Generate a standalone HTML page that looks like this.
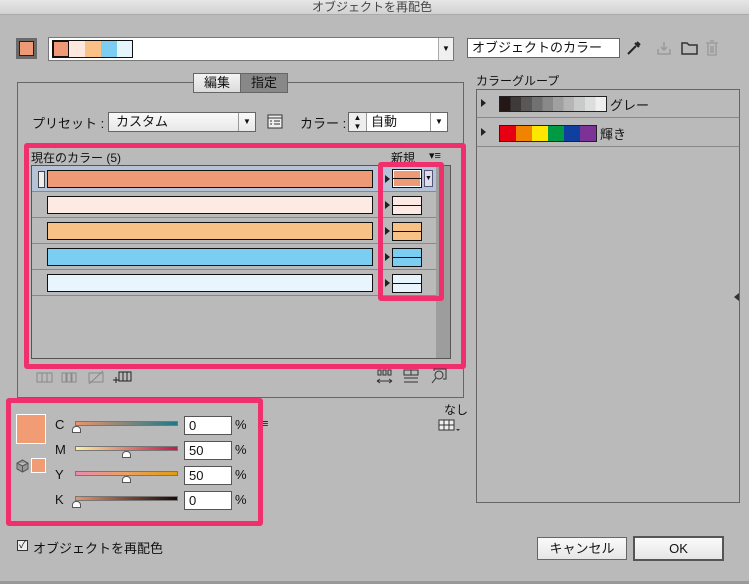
<!DOCTYPE html>
<html><head><meta charset="utf-8"><style>
*{box-sizing:border-box;margin:0;padding:0}
body{width:749px;height:584px;background:#bababa;font-family:"Liberation Sans","Noto Sans CJK JP",sans-serif;font-size:12px;color:#111;position:relative;overflow:hidden}
.a{position:absolute}
.box{position:absolute;background:#fff;border:1px solid #666}
.pink{position:absolute;border:5px solid #f0306c;border-radius:3px}
.bar{position:absolute;left:47px;width:326px;height:18px;border:1px solid #111}
.ns{position:absolute;left:392px;width:30px;height:19px;border:1px solid #111}
.ns:after{content:"";position:absolute;left:0;right:0;top:8px;border-top:1px solid #111}
.tri{position:absolute;width:0;height:0;border-left:5px solid #222;border-top:4px solid transparent;border-bottom:4px solid transparent}
.sl{position:absolute;left:75px;width:103px;height:5px;border:1px solid #777}
.th{position:absolute;width:9px;height:7px;background:#fff;border:1px solid #555;border-radius:4px 4px 0 0}
.in{position:absolute;left:184px;width:48px;height:19px;background:#fff;border:1px solid #555;font-size:13px;padding-left:4px;line-height:17px}
.btn{position:absolute;background:linear-gradient(#fafafa,#e6e6e6);border:1px solid #666;text-align:center;font-size:13px;line-height:21px}
</style></head><body>
<div class="a" style="left:0;top:0;width:749px;height:15px;background:linear-gradient(#e6e6e6,#d2d2d2);border-bottom:1px solid #aaa"></div>
<div class="a" style="left:312px;top:0;font-size:12px;color:#444;line-height:14px">オブジェクトを再配色</div>

<div class="a" style="left:16px;top:38px;width:21px;height:21px;background:#6a6a6a;padding:3px"><div style="width:15px;height:15px;background:#ef9a76;border:1px solid #222"></div></div>
<div class="box" style="left:48px;top:37px;width:406px;height:24px;border-color:#777"></div>
<div class="a" style="left:52px;top:40px;width:81px;height:18px;border:1px solid #111;display:flex">
<div style="width:16px;background:#ef9a76;border:1px solid #111"></div><div style="width:16px;background:#fde8df"></div><div style="width:16px;background:#f9c185"></div><div style="width:16px;background:#7dccf2"></div><div style="flex:1;background:#e6f4fc"></div></div>
<div class="a" style="left:438px;top:38px;width:15px;height:22px;border-left:1px solid #aaa;background:#f0f0f0;font-size:8px;text-align:center;line-height:22px">▼</div>

<div class="box" style="left:467px;top:38px;width:153px;height:20px;font-size:13px;line-height:18px;padding-left:4px">オブジェクトのカラー</div>
<svg class="a" style="left:626px;top:40px" width="16" height="16"><path d="M2 14 L10 6 M9 3 L13 7 M11 2 L14 5" stroke="#222" stroke-width="2" fill="none"/></svg>
<svg class="a" style="left:656px;top:40px" width="16" height="16"><path d="M2 9 V14 H14 V9 M8 2 V10 M5 7 L8 10 L11 7" stroke="#999" stroke-width="1.5" fill="none"/></svg>
<svg class="a" style="left:681px;top:40px" width="17" height="15"><path d="M1 3 H6 L8 5 H16 V14 H1 Z" stroke="#333" stroke-width="1.5" fill="none"/></svg>
<svg class="a" style="left:705px;top:40px" width="14" height="16"><path d="M1 3 H13 M5 1 H9 M3 3 V15 H11 V3 M6 6 V13 M8 6 V13" stroke="#999" stroke-width="1.3" fill="none"/></svg>

<!-- main panel -->
<div class="a" style="left:17px;top:82px;width:447px;height:316px;border:1px solid #666"></div>
<div class="a" style="left:193px;top:73px;width:95px;height:20px;background:#bababa;border:1px solid #666;display:flex;font-size:13px;line-height:18px">
<div style="width:47px;text-align:center;background:linear-gradient(#f3f3f3,#dcdcdc);border-right:1px solid #666">編集</div><div style="flex:1;text-align:center;background:#888">指定</div></div>

<div class="a" style="left:32px;top:113px;font-size:13px">プリセット :</div>
<div class="box" style="left:108px;top:112px;width:148px;height:20px;background:linear-gradient(#fafafa,#e8e8e8);font-size:13px;line-height:18px;padding-left:7px">カスタム<span style="position:absolute;right:0;top:0;width:17px;border-left:1px solid #999;text-align:center;font-size:8px">▼</span></div>
<svg class="a" style="left:267px;top:114px" width="16" height="15"><rect x="1" y="1" width="14" height="13" fill="#eee" stroke="#333"/><path d="M1 4 H15 M3 7 H5 M7 7 H13 M3 10 H5 M7 10 H13" stroke="#333"/></svg>
<div class="a" style="left:300px;top:113px;font-size:13px">カラー :</div>
<div class="box" style="left:348px;top:112px;width:100px;height:20px;font-size:13px;line-height:18px;padding-left:22px">自動<span style="position:absolute;left:0;top:0;width:18px;height:18px;border-right:1px solid #999;background:#eee;font-size:8px;text-align:center;line-height:9px">▲<br>▼</span><span style="position:absolute;right:0;top:0;width:17px;border-left:1px solid #999;text-align:center;font-size:8px">▼</span></div>

<div class="a" style="left:31px;top:149px;font-size:12px">現在のカラー (5)</div>
<div class="a" style="left:391px;top:149px;font-size:12px">新規</div>
<div class="a" style="left:429px;top:149px;font-size:11px">▾≡</div>
<div class="a" style="left:31px;top:165px;width:420px;height:194px;border:1px solid #555;background:#bababa"></div>
<div class="a" style="left:32px;top:166px;width:404px;height:26px;background:#b6c2d6;border-bottom:1px solid #888"></div>
<div class="a" style="left:32px;top:192px;width:404px;height:26px;border-bottom:1px solid #888"></div>
<div class="a" style="left:32px;top:218px;width:404px;height:26px;border-bottom:1px solid #888"></div>
<div class="a" style="left:32px;top:244px;width:404px;height:26px;border-bottom:1px solid #888"></div>
<div class="a" style="left:32px;top:270px;width:404px;height:26px;border-bottom:1px solid #888"></div>
<div class="a" style="left:436px;top:166px;width:14px;height:192px;background:#9d9d9d"></div>
<div class="a" style="left:38px;top:171px;width:7px;height:17px;border:1px solid #444;background:#eee"></div>
<div class="bar" style="top:170px;background:#ef9a76"></div>
<div class="bar" style="top:196px;background:#fdebe3"></div>
<div class="bar" style="top:222px;background:#f8c286"></div>
<div class="bar" style="top:248px;background:#7ccdf2"></div>
<div class="bar" style="top:274px;background:#e8f5fd"></div>
<div class="tri" style="left:385px;top:175px"></div><div class="tri" style="left:385px;top:201px"></div><div class="tri" style="left:385px;top:227px"></div><div class="tri" style="left:385px;top:253px"></div><div class="tri" style="left:385px;top:279px"></div>
<div class="ns" style="top:169px;background:#ef9a76;outline:1px solid #fff;outline-offset:-2px"></div>
<div class="a" style="left:424px;top:170px;width:9px;height:17px;background:#dde;border:1px solid #557;font-size:7px;text-align:center;line-height:15px">▼</div>
<div class="ns" style="top:196px;background:#fdebe3"></div>
<div class="ns" style="top:222px;background:#f8c286"></div>
<div class="ns" style="top:248px;background:#7ccdf2"></div>
<div class="ns" style="top:274px;background:#e8f5fd"></div>
<div class="pink" style="left:24px;top:143px;width:442px;height:226px"></div>
<div class="pink" style="left:378px;top:162px;width:66px;height:139px"></div>

<svg class="a" style="left:35px;top:370px" width="100" height="16"><g stroke="#888" fill="none"><rect x="2" y="3" width="15" height="9"/><path d="M7 3 V12 M12 3 V12"/><rect x="27" y="3" width="4" height="9"/><rect x="32" y="3" width="4" height="9"/><rect x="37" y="3" width="4" height="9"/><rect x="54" y="3" width="14" height="9"/><path d="M54 14 L68 1"/></g><g stroke="#222" fill="none"><rect x="84" y="2" width="12" height="9"/><path d="M88 2 V11 M92 2 V11 M78 10 H84 M81 7 V13"/></g></svg>
<svg class="a" style="left:376px;top:368px" width="72" height="18"><g stroke="#333" fill="none"><rect x="2" y="2" width="3" height="5"/><rect x="7" y="2" width="3" height="5"/><rect x="12" y="2" width="3" height="5"/><path d="M1 13 H16 M1 13 l3 -2 M1 13 l3 2 M16 13 l-3 -2 M16 13 l-3 2"/><rect x="28" y="2" width="14" height="5"/><path d="M28 10 H42 M28 14 H42 M35 2 V7"/><circle cx="63" cy="7" r="4"/><path d="M60 10 L56 15 M58 3 V1 H70 V11 H67"/></g></svg>

<!-- sliders -->
<div class="a" style="left:16px;top:414px;width:30px;height:30px;background:#f19c75;border:1px solid #fff"></div>
<svg class="a" style="left:16px;top:459px" width="13" height="14"><path d="M6.5 1 L12 4 V10 L6.5 13 L1 10 V4 Z M1 4 L6.5 7 L12 4 M6.5 7 V13" stroke="#555" fill="#999"/></svg>
<div class="a" style="left:31px;top:458px;width:15px;height:15px;background:#f19c75;border:1px solid #fff"></div>
<div class="a" style="left:55px;top:417px;font-size:13px">C</div>
<div class="a" style="left:55px;top:442px;font-size:13px">M</div>
<div class="a" style="left:55px;top:467px;font-size:13px">Y</div>
<div class="a" style="left:55px;top:492px;font-size:13px">K</div>
<div class="sl" style="top:421px;background:linear-gradient(90deg,#e9946f,#1b7a87)"></div>
<div class="sl" style="top:446px;background:linear-gradient(90deg,#fbf2a0,#e08070,#c8174a)"></div>
<div class="sl" style="top:471px;background:linear-gradient(90deg,#ea8cb0,#eba060,#e29b10)"></div>
<div class="sl" style="top:496px;background:linear-gradient(90deg,#ea9470,#804a38,#150c08)"></div>
<div class="th" style="left:72px;top:426px"></div>
<div class="th" style="left:122px;top:451px"></div>
<div class="th" style="left:122px;top:476px"></div>
<div class="th" style="left:72px;top:501px"></div>
<div class="in" style="top:416px">0</div><div class="in" style="top:441px">50</div><div class="in" style="top:466px">50</div><div class="in" style="top:491px">0</div>
<div class="a" style="left:235px;top:417px;font-size:13px">%</div>
<div class="a" style="left:235px;top:442px;font-size:13px">%</div>
<div class="a" style="left:235px;top:467px;font-size:13px">%</div>
<div class="a" style="left:235px;top:492px;font-size:13px">%</div>
<div class="a" style="left:262px;top:418px;font-size:11px">≡</div>
<div class="pink" style="left:6px;top:398px;width:257px;height:128px"></div>
<div class="a" style="left:444px;top:401px;font-size:12px">なし</div>
<svg class="a" style="left:438px;top:419px" width="24" height="14"><rect x="1" y="1" width="15" height="10" fill="#eee" stroke="#333"/><path d="M6 1 V11 M11 1 V11 M1 6 H16" stroke="#333"/><path d="M18 10 H22 L20 12 Z" fill="#333"/></svg>

<div class="a" style="left:17px;top:540px;width:11px;height:11px;border:1px solid #333;background:#eee;font-size:10px;line-height:9px;text-align:center">✓</div>
<div class="a" style="left:33px;top:538px;font-size:13px">オブジェクトを再配色</div>

<!-- color group -->
<div class="a" style="left:476px;top:72px;font-size:12px">カラーグループ</div>
<div class="a" style="left:476px;top:89px;width:264px;height:414px;border:1px solid #666"></div>
<div class="a" style="left:477px;top:117px;width:262px;border-top:1px solid #888"></div>
<div class="a" style="left:477px;top:146px;width:262px;border-top:1px solid #888"></div>
<div class="tri" style="left:481px;top:99px"></div><div class="tri" style="left:481px;top:128px"></div>
<div class="a" style="left:499px;top:96px;width:108px;height:16px;border:1px solid #222;background:linear-gradient(90deg,#231815 0 10%,#3e3a39 10% 20%,#595757 20% 30%,#727171 30% 40%,#898989 40% 50%,#9fa0a0 50% 60%,#b5b5b6 60% 70%,#c9caca 70% 80%,#dcdddd 80% 90%,#efefef 90%)"></div>
<div class="a" style="left:610px;top:95px;font-size:13px">グレー</div>
<div class="a" style="left:499px;top:125px;width:98px;height:17px;border:1px solid #222;background:linear-gradient(90deg,#e60012 0 16.6%,#f08300 16.6% 33.3%,#ffe600 33.3% 50%,#009944 50% 66.6%,#0f3f9f 66.6% 83.3%,#7d3296 83.3%)"></div>
<div class="a" style="left:600px;top:124px;font-size:13px">輝き</div>
<div class="a" style="left:734px;top:293px;width:0;height:0;border-right:5px solid #333;border-top:4px solid transparent;border-bottom:4px solid transparent"></div>

<div class="btn" style="left:537px;top:537px;width:90px;height:23px">キャンセル</div>
<div class="btn" style="left:633px;top:536px;width:91px;height:25px;border:2px solid #555">OK</div>
<div class="a" style="left:0;top:581px;width:749px;height:3px;background:#999"></div>
</body></html>
